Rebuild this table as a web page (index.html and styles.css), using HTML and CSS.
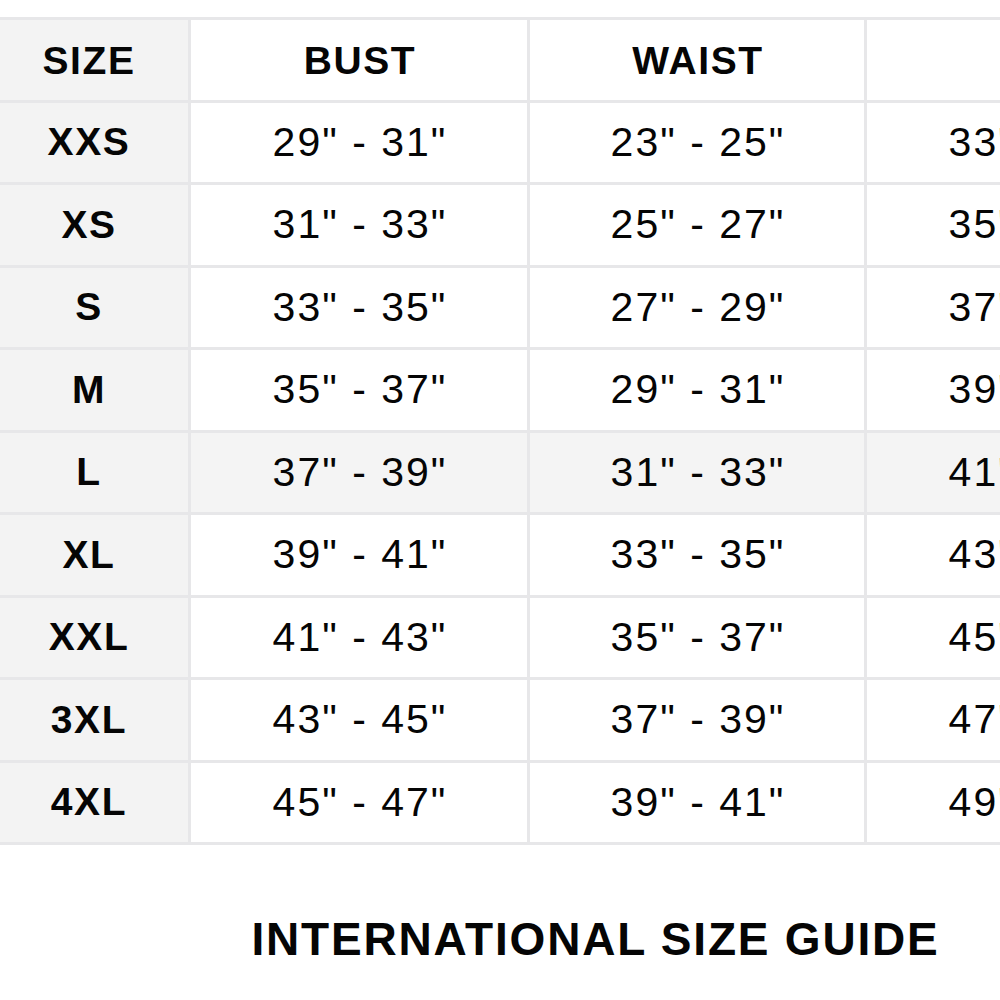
FILE: index.html
```html
<!DOCTYPE html>
<html>
<head>
<meta charset="utf-8">
<link rel="stylesheet" href="styles.css">
</head>
<body>
<div class="page">
  <div class="chart">
    <div class="cell size head">SIZE</div>
    <div class="cell head">BUST</div>
    <div class="cell head">WAIST</div>
    <div class="cell head">HIP</div>

    <div class="cell size">XXS</div>
    <div class="cell">29" - 31"</div>
    <div class="cell">23" - 25"</div>
    <div class="cell">33" - 35"</div>

    <div class="cell size">XS</div>
    <div class="cell">31" - 33"</div>
    <div class="cell">25" - 27"</div>
    <div class="cell">35" - 37"</div>

    <div class="cell size">S</div>
    <div class="cell">33" - 35"</div>
    <div class="cell">27" - 29"</div>
    <div class="cell">37" - 39"</div>

    <div class="cell size">M</div>
    <div class="cell">35" - 37"</div>
    <div class="cell">29" - 31"</div>
    <div class="cell">39" - 41"</div>

    <div class="cell size">L</div>
    <div class="cell shade">37" - 39"</div>
    <div class="cell shade">31" - 33"</div>
    <div class="cell shade">41" - 43"</div>

    <div class="cell size">XL</div>
    <div class="cell">39" - 41"</div>
    <div class="cell">33" - 35"</div>
    <div class="cell">43" - 45"</div>

    <div class="cell size">XXL</div>
    <div class="cell">41" - 43"</div>
    <div class="cell">35" - 37"</div>
    <div class="cell">45" - 47"</div>

    <div class="cell size">3XL</div>
    <div class="cell">43" - 45"</div>
    <div class="cell">37" - 39"</div>
    <div class="cell">47" - 49"</div>

    <div class="cell size">4XL</div>
    <div class="cell">45" - 47"</div>
    <div class="cell">39" - 41"</div>
    <div class="cell">49" - 51"</div>
  </div>
  <h1 class="title">INTERNATIONAL SIZE GUIDE</h1>
</div>
</body>
</html>
```

FILE: styles.css
```css
html, body {
  margin: 0;
  padding: 0;
  background: #ffffff;
  overflow: hidden;
}

.page {
  width: 1000px;
  height: 1000px;
  overflow: hidden;
  font-family: "Liberation Sans", Arial, Helvetica, sans-serif;
  color: #050505;
}

.chart {
  display: grid;
  grid-template-columns: 188px 336px 334px 336px;
  grid-auto-rows: 79.5px;
  gap: 3px;
  padding: 3px 0;
  margin-top: 17px;
  width: max-content;
  background: #e7e7e9;
}

.cell {
  background: #ffffff;
  display: flex;
  align-items: center;
  justify-content: center;
  font-size: 41px;
  letter-spacing: 2px;
  padding-left: 2px;
  white-space: nowrap;
}

.cell.head {
  font-weight: bold;
  font-size: 39px;
  letter-spacing: 1.6px;
  padding-top: 2px;
}

.cell.size {
  background: #f3f3f3;
  font-weight: bold;
  font-size: 39px;
  letter-spacing: 1.6px;
  padding-left: 0;
  padding-right: 10px;
}

.cell.shade {
  background: #f4f4f4;
}

.title {
  margin: 71px 0 0 0;
  padding-left: 191px;
  text-align: center;
  font-size: 46px;
  line-height: 46px;
  font-weight: bold;
  letter-spacing: 1.8px;
  white-space: nowrap;
}
```
